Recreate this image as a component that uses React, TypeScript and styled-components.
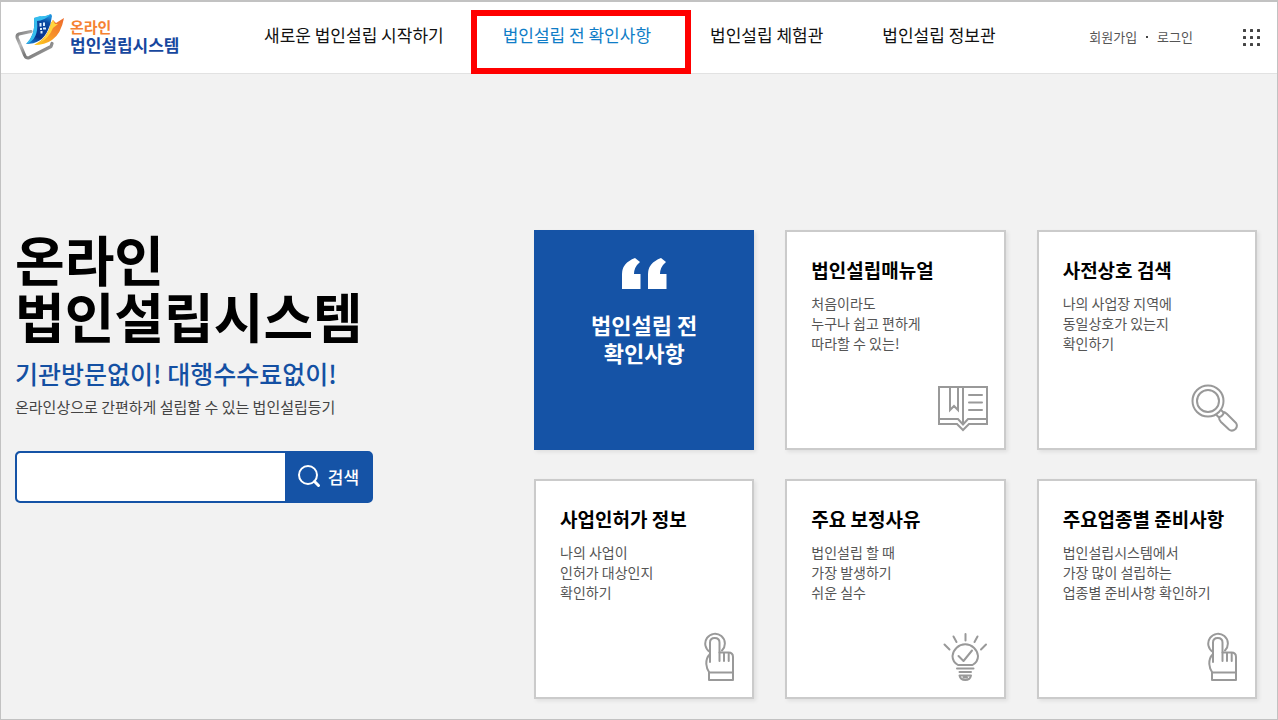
import React from "react";
import styled, { createGlobalStyle } from "styled-components";

const GlobalStyle = createGlobalStyle`
  *, *::before, *::after { box-sizing: border-box; }
  body {
    margin: 0;
    background: #f2f2f2;
    color: #000;
    font-family: "Noto Sans CJK KR", "Noto Sans", sans-serif;
  }
  a { color: inherit; text-decoration: none; }
  h1, h2, p, ul { margin: 0; padding: 0; }
  ul { list-style: none; }
`;

const Page = styled.div`
  min-height: 100vh;
  border: 1px solid #c2c2c2;
  border-top-width: 2px;
`;

const Header = styled.header`
  display: flex;
  align-items: flex-start;
  height: 72px;
  padding: 0 17px 0 14px;
  background: #fff;
  border-bottom: 1px solid #e2e2e2;
`;

const Logo = styled.a`
  display: flex;
  gap: 4px;
  width: 249px;
  padding-top: 11px;
  flex-shrink: 0;
`;

const LogoText = styled.span`
  display: flex;
  flex-direction: column;
  padding-top: 5px;
  font-weight: 700;
`;

const LogoTop = styled.span`
  color: #f58232;
  font-size: 15px;
  line-height: 18px;
`;

const LogoBottom = styled.span`
  color: #17479e;
  font-size: 17px;
  line-height: 18px;
  white-space: nowrap;
`;

const Nav = styled.nav`
  display: flex;
  gap: 59px;
  padding-top: 20px;
`;

const NavLink = styled.a<{ $active?: boolean }>`
  position: relative;
  color: ${(p) => (p.$active ? "#0f7dc7" : "#111")};
  font-size: 17px;
  line-height: 26px;
  white-space: nowrap;
`;

const Highlight = styled.span`
  position: absolute;
  inset: -12px -40px -26px -32px;
  border: 6px solid #f00;
  pointer-events: none;
`;

const Utility = styled.div`
  display: flex;
  align-items: center;
  gap: 9px;
  margin-left: auto;
  padding-top: 25px;
  color: #555;
  font-size: 13px;
  line-height: 20px;
  white-space: nowrap;
`;

const Dot = styled.span`
  width: 2px;
  height: 2px;
  background: #444;
`;

const MenuButton = styled.button`
  display: flex;
  margin: 26px 0 0 49px;
  padding: 0;
  border: 0;
  background: none;
`;

const Main = styled.main`
  display: grid;
  grid-template-columns: minmax(360px, 1fr) 723px;
  align-items: start;
  padding: 156px 20px 19px 14px;
`;

const Title = styled.h1`
  font-size: 54px;
  font-weight: 700;
  line-height: 57px;
`;

const Lead = styled.p`
  margin-top: 11px;
  color: #1450a3;
  font-size: 25px;
  font-weight: 500;
  line-height: 36px;
`;

const Description = styled.p`
  margin-top: 4px;
  color: #444;
  font-size: 15px;
  line-height: 24px;
`;

const Search = styled.form`
  display: flex;
  width: 358px;
  height: 52px;
  margin-top: 32px;
  border: 2px solid #1553a6;
  border-radius: 5px;
  background: #1553a6;
  overflow: hidden;
`;

const SearchInput = styled.input`
  flex: 1;
  min-width: 0;
  padding: 0 14px;
  border: 0;
  border-radius: 3px 0 0 3px;
  outline: 0;
  background: #fff;
  font: inherit;
  font-size: 17px;
`;

const SearchButton = styled.button`
  display: flex;
  align-items: center;
  justify-content: center;
  gap: 7px;
  width: 86px;
  padding: 0 0 2px;
  border: 0;
  background: #1553a6;
  color: #fff;
  font: inherit;
  font-size: 17px;
  font-weight: 500;
`;

const Cards = styled.ul`
  display: grid;
  grid-template-columns: repeat(3, 1fr);
  gap: 29px 31px;
`;

const cardBase = `
  display: flex;
  flex-direction: column;
  height: 220px;
  box-shadow: 2px 2px 4px rgba(0, 0, 0, 0.08);
`;

const Card = styled.a`
  ${cardBase}
  padding: 24px 16px 16px 24px;
  border: 2px solid #cbcbcb;
  background: #fff;
`;

const FeatureCard = styled.a`
  ${cardBase}
  align-items: center;
  padding-top: 28px;
  background: #1553a6;
  color: #fff;
`;

const FeatureTitle = styled.h2`
  margin-top: 20px;
  font-size: 22px;
  font-weight: 700;
  line-height: 28px;
  text-align: center;
`;

const CardTitle = styled.h2`
  font-size: 19px;
  font-weight: 700;
  line-height: 28px;
  white-space: nowrap;
`;

const CardText = styled.p`
  margin-top: 9px;
  color: #555;
  font-size: 14px;
  line-height: 20px;
  white-space: pre-line;
`;

const CardIcon = styled.span`
  display: flex;
  margin: auto 0 0 auto;
`;

const stroke = {
  fill: "none",
  stroke: "#999",
  strokeWidth: 2,
  strokeLinejoin: "round" as const,
  strokeLinecap: "round" as const,
};

const LogoMark = () => (
  <svg width="51" height="50" viewBox="0 0 51 50" aria-hidden="true">
    <defs>
      <linearGradient id="lgGrey" x1="0" y1="0" x2="1" y2="1">
        <stop offset="0" stopColor="#777" />
        <stop offset="0.3" stopColor="#bbb" />
        <stop offset="0.55" stopColor="#777" />
        <stop offset="1" stopColor="#aaa" />
      </linearGradient>
      <linearGradient id="lgBlue" x1="0.6" y1="0" x2="0.3" y2="1">
        <stop offset="0" stopColor="#1d8fdc" />
        <stop offset="0.2" stopColor="#0b4aa2" />
        <stop offset="0.75" stopColor="#07328b" />
        <stop offset="1" stopColor="#1679cc" />
      </linearGradient>
      <linearGradient id="lgOrange" x1="0.9" y1="0" x2="0.2" y2="1">
        <stop offset="0" stopColor="#ee6c2b" />
        <stop offset="0.55" stopColor="#f6902a" />
        <stop offset="1" stopColor="#fcc21c" />
      </linearGradient>
    </defs>
    <path d="M16 18.500 L4 21 Q1.500 22 2.300 25 L9.500 42 Q11 46 14.500 44.500 L36 33.500 L37 30.500" fill="none" stroke="url(#lgGrey)" strokeWidth="3.200" strokeLinejoin="round" strokeLinecap="round" />
    <path d="M19 32 Q33 25 36 10 L38 7 L41 10 L49 5 Q46 21 37 27 Q30 32 19 32Z" fill="url(#lgOrange)" />
    <path d="M36 10 L38 7 L40 11 L43 11 L38 15 Q34 25 25 29.500 Q34 21 36 10Z" fill="#ffd63d" />
    <path d="M19 5 L25 4 Q30 4 36 1 L37 3 Q36 11 33 17 Q27 31 11 31 Q21 22 19 5Z" fill="url(#lgBlue)" />
    <path d="M19 5 Q21 21 11 31 Q24 27 22 8 Q29 8 36 1 Q30 4 25 3Z" fill="#35bdee" />
    <path d="M24.500 10h2v3.500h-2zM28 9.500h2v3.500h-2zM25 15h2v2h-2zM28 14.500h3v2h-3zM25.500 18h2v2.500h-2z" fill="#dceeff" />
  </svg>
);

const GridDots = () => (
  <svg width="18" height="18" viewBox="0 0 18 18" fill="#444" aria-hidden="true">
    {[0, 7, 14].map((y) => [0, 7, 14].map((x) => <rect key={`${x}-${y}`} x={x + 1} y={y + 1} width="3" height="3" rx="0.500" />))}
  </svg>
);

const SearchGlyph = () => (
  <svg width="24" height="24" viewBox="0 0 24 24" fill="none" stroke="#fff" strokeLinecap="round" aria-hidden="true">
    <circle cx="11" cy="11" r="9" strokeWidth="2" />
    <path d="M17.500 17.500 L21.500 21.500" strokeWidth="3" />
  </svg>
);

const Quote = () => (
  <svg width="46" height="32" viewBox="0 0 46 32" fill="#fff" aria-hidden="true">
    <path d="M1 31V16Q1 5 14 0L19 4Q13 9 13 16H19.500V31Z" />
    <path d="M27 31V16Q27 5 40 0L45 4Q39 9 39 16H45.500V31Z" />
  </svg>
);

const BookIcon = () => (
  <svg width="50" height="46" viewBox="0 0 50 46" {...stroke} strokeLinejoin="miter" aria-hidden="true">
    <path d="M1 1H49V38H31L25 44L19 38H1Z" />
    <path d="M1 33H20L25 38.500L30 33H49M25 1V38" />
    <path d="M12 2V24L16 20L20 24V2M31 9H44M31 16.500H44M31 24H44" />
  </svg>
);

const MagnifierIcon = () => (
  <svg width="48" height="48" viewBox="0 0 48 48" {...stroke} aria-hidden="true">
    <circle cx="17" cy="17" r="15.500" />
    <circle cx="17" cy="17" r="11" />
    <path d="M25.500 31 L28 33.500 Q28 36 30 38 L38 45.500 Q41 48 44.500 45 Q47 42 45 39 L36 30 Q34 28 32 28 L30 26" />
    <path d="M28 33 Q31 33 33 28.500" />
  </svg>
);

const TouchIcon = () => (
  <svg width="32" height="49" viewBox="0 0 32 49" {...stroke} aria-hidden="true">
    <path d="M6 20 A9.800 9.800 0 1 1 18 18.500" />
    <path d="M6 30 V10.500 Q6 6 10.700 6 Q15.500 6 15.500 10.500 V20.500 H24.500 Q29 20.500 29 25 V48 H5 V40.500 H29" />
    <path d="M6 22 Q2 26 2.300 32 Q2.700 37 5 40 M15.500 20.500 V29 M20 21 V29 M24.700 21 V29" />
  </svg>
);

const BulbIcon = () => (
  <svg width="46" height="49" viewBox="0 0 46 49" {...stroke} aria-hidden="true">
    <path d="M16 33 C12.500 31 10.500 28 10.500 24 A12.800 12.800 0 0 1 36 24 C36 28 34 31 30.500 33 Z" />
    <path d="M16.500 24 L21.500 29 L30 18.500" />
    <path d="M15 36.500H31.500M17.500 40H29M17.500 43.500H29Q28 48 23.300 48Q18.500 48 17.500 43.500M21.500 45.500H25" />
    <path d="M23.500 2V8.500M11.500 4.500L14.500 10M35.500 4.500L32.500 10M2.500 12.500L7.500 17.500M44 12.500L39 17.500" />
  </svg>
);

const cards = [
  { title: "법인설립매뉴얼", text: "처음이라도\n누구나 쉽고 편하게\n따라할 수 있는!", Icon: BookIcon },
  { title: "사전상호 검색", text: "나의 사업장 지역에\n동일상호가 있는지\n확인하기", Icon: MagnifierIcon },
  { title: "사업인허가 정보", text: "나의 사업이\n인허가 대상인지\n확인하기", Icon: TouchIcon },
  { title: "주요 보정사유", text: "법인설립 할 때\n가장 발생하기\n쉬운 실수", Icon: BulbIcon },
  { title: "주요업종별 준비사항", text: "법인설립시스템에서\n가장 많이 설립하는\n업종별 준비사항 확인하기", Icon: TouchIcon },
];

export default function App() {
  return (
    <>
      <GlobalStyle />
      <Page>
        <Header>
          <Logo href="#home">
            <LogoMark />
            <LogoText>
              <LogoTop>온라인</LogoTop>
              <LogoBottom>법인설립시스템</LogoBottom>
            </LogoText>
          </Logo>
          <Nav>
            <NavLink href="#start">새로운 법인설립 시작하기</NavLink>
            <NavLink href="#check" $active>
              법인설립 전 확인사항
              <Highlight />
            </NavLink>
            <NavLink href="#experience">법인설립 체험관</NavLink>
            <NavLink href="#info">법인설립 정보관</NavLink>
          </Nav>
          <Utility>
            <a href="#join">회원가입</a>
            <Dot />
            <a href="#login">로그인</a>
          </Utility>
          <MenuButton type="button" aria-label="전체메뉴">
            <GridDots />
          </MenuButton>
        </Header>
        <Main>
          <section>
            <Title>
              온라인
              <br />
              법인설립시스템
            </Title>
            <Lead>기관방문없이! 대행수수료없이!</Lead>
            <Description>온라인상으로 간편하게 설립할 수 있는 법인설립등기</Description>
            <Search role="search" onSubmit={(e) => e.preventDefault()}>
              <SearchInput type="text" aria-label="검색어" />
              <SearchButton type="submit">
                <SearchGlyph />
                검색
              </SearchButton>
            </Search>
          </section>
          <Cards>
            <li>
              <FeatureCard href="#check">
                <Quote />
                <FeatureTitle>
                  법인설립 전
                  <br />
                  확인사항
                </FeatureTitle>
              </FeatureCard>
            </li>
            {cards.map(({ title, text, Icon }) => (
              <li key={title}>
                <Card href="#card">
                  <CardTitle>{title}</CardTitle>
                  <CardText>{text}</CardText>
                  <CardIcon>
                    <Icon />
                  </CardIcon>
                </Card>
              </li>
            ))}
          </Cards>
        </Main>
      </Page>
    </>
  );
}
